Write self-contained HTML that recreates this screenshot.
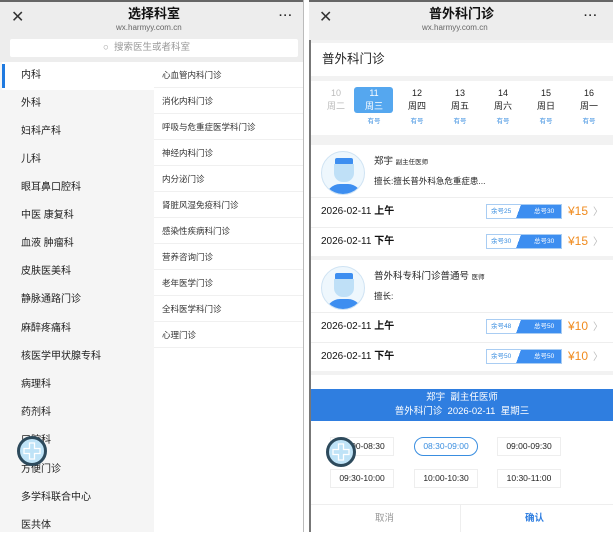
<!DOCTYPE html><html><head><meta charset="utf-8"><style>
*{margin:0;padding:0;box-sizing:border-box}
body{width:613px;height:532px;position:relative;overflow:hidden;background:#fff;font-family:"Liberation Sans","Noto Sans CJK SC",sans-serif;color:#222}
.a{position:absolute;white-space:nowrap}
.hdr{position:absolute;top:0;height:40px;background:#ededed;border-top:2px solid #666}
.t{font-size:13px;font-weight:bold;color:#111;line-height:15px}
.u{font-size:8px;color:#666;line-height:10px}
.nav{font-size:10px;color:#222;line-height:14px}
.row{font-size:10px;color:#111;line-height:12px}
.badge{position:absolute;width:76px;height:15px;border:1px solid #a9cdf3;background:linear-gradient(110deg,#fff 0 43%,#3d8ef0 43% 100%);font-size:6.5px}
.badge span{position:absolute;top:3px;line-height:8px}
.pr{color:#f08a1c;font-size:12px;line-height:14px}
.chev{color:#bbb;font-size:10px;line-height:12px}
.slot{position:absolute;width:64px;height:19px;border:1px solid #eee;font-size:8.5px;text-align:center;line-height:17px;color:#222}
.plus{position:absolute;width:30px;height:30px}
.av{position:absolute;width:44px;height:44px;border-radius:50%;border:1px solid #cfe3f3;background:#eef7fd;overflow:hidden}
</style></head><body>
<!-- left panel -->
<div class="a" style="left:0;top:0;width:2px;height:532px;background:#777"></div>
<div class="hdr" style="left:0;width:304px"></div>
<div class="a" style="left:11px;top:9px;font-size:16px;line-height:18px;color:#333">✕</div>
<div class="a t" style="left:128px;top:6px">选择科室</div>
<div class="a u" style="left:116px;top:23px">wx.harmyy.com.cn</div>
<div class="a" style="left:279px;top:10px;font-size:11px;line-height:12px;font-weight:bold;letter-spacing:1px">···</div>
<div class="a" style="left:0;top:40px;width:304px;height:22px;background:#ededed"></div>
<div class="a" style="left:10px;top:39px;width:288px;height:18px;background:#fff;border-radius:2px"></div>
<div class="a" style="left:103px;top:42px;font-size:9.5px;line-height:12px;color:#999">○&nbsp; 搜索医生或者科室</div>
<div class="a" style="left:0;top:62px;width:154px;height:470px;background:#f5f5f5"></div>
<div class="a" style="left:2px;top:62px;width:152px;height:28px;background:#fff"></div>
<div class="a" style="left:2px;top:64px;width:3px;height:24px;background:#1f7ae0"></div>
<div class="a" style="left:154px;top:62px;width:150px;height:470px;background:#fff"></div>
<div class="a nav" style="left:21px;top:69px">内科</div>
<div class="a nav" style="left:21px;top:97px">外科</div>
<div class="a nav" style="left:21px;top:125px">妇科产科</div>
<div class="a nav" style="left:21px;top:153px">儿科</div>
<div class="a nav" style="left:21px;top:181px">眼耳鼻口腔科</div>
<div class="a nav" style="left:21px;top:209px">中医 康复科</div>
<div class="a nav" style="left:21px;top:237px">血液 肿瘤科</div>
<div class="a nav" style="left:21px;top:265px">皮肤医美科</div>
<div class="a nav" style="left:21px;top:293px">静脉通路门诊</div>
<div class="a nav" style="left:21px;top:322px">麻醉疼痛科</div>
<div class="a nav" style="left:21px;top:350px">核医学甲状腺专科</div>
<div class="a nav" style="left:21px;top:378px">病理科</div>
<div class="a nav" style="left:21px;top:406px">药剂科</div>
<div class="a nav" style="left:21px;top:434px">口腔科</div>
<div class="a nav" style="left:21px;top:463px">方便门诊</div>
<div class="a nav" style="left:21px;top:491px">多学科联合中心</div>
<div class="a nav" style="left:21px;top:519px">医共体</div>
<div class="a" style="left:154px;top:62px;width:150px">
<div style="font-size:8.5px;color:#333">
<div style="height:26px;line-height:26px;padding-left:8px;border-bottom:1px solid #f0f0f0">心血管内科门诊</div>
<div style="height:26px;line-height:26px;padding-left:8px;border-bottom:1px solid #f0f0f0">消化内科门诊</div>
<div style="height:26px;line-height:26px;padding-left:8px;border-bottom:1px solid #f0f0f0">呼吸与危重症医学科门诊</div>
<div style="height:26px;line-height:26px;padding-left:8px;border-bottom:1px solid #f0f0f0">神经内科门诊</div>
<div style="height:26px;line-height:26px;padding-left:8px;border-bottom:1px solid #f0f0f0">内分泌门诊</div>
<div style="height:26px;line-height:26px;padding-left:8px;border-bottom:1px solid #f0f0f0">肾脏风湿免疫科门诊</div>
<div style="height:26px;line-height:26px;padding-left:8px;border-bottom:1px solid #f0f0f0">感染性疾病科门诊</div>
<div style="height:26px;line-height:26px;padding-left:8px;border-bottom:1px solid #f0f0f0">营养咨询门诊</div>
<div style="height:26px;line-height:26px;padding-left:8px;border-bottom:1px solid #f0f0f0">老年医学门诊</div>
<div style="height:26px;line-height:26px;padding-left:8px;border-bottom:1px solid #f0f0f0">全科医学科门诊</div>
<div style="height:26px;line-height:26px;padding-left:8px;border-bottom:1px solid #f0f0f0">心理门诊</div>
</div></div>
<div class="a" style="left:303px;top:0;width:1px;height:532px;background:#bbb"></div>
<svg class="plus" style="left:17px;top:436px" viewBox="0 0 30 30"><circle cx="15" cy="15" r="13.5" fill="#bfe3f7" stroke="#2d4a5c" stroke-width="3"/><path d="M12.5 7h5v5.5H23v5h-5.5V23h-5v-5.5H7v-5h5.5z" fill="none" stroke="#fff" stroke-width="1.3"/></svg>

<!-- right panel -->
<div class="a" style="left:309px;top:0;width:2px;height:532px;background:#777"></div>
<div class="hdr" style="left:309px;width:304px"></div>
<div class="a" style="left:319px;top:9px;font-size:16px;line-height:18px;color:#333">✕</div>
<div class="a t" style="left:429px;top:6px">普外科门诊</div>
<div class="a u" style="left:422px;top:23px">wx.harmyy.com.cn</div>
<div class="a" style="left:584px;top:10px;font-size:11px;line-height:12px;font-weight:bold;letter-spacing:1px">···</div>
<div class="a" style="left:311px;top:40px;width:302px;height:492px;background:#f2f2f2"></div>
<div class="a" style="left:311px;top:43px;width:302px;height:33px;background:#fff"></div>
<div class="a" style="left:322px;top:52px;font-size:12.5px;line-height:15px;color:#222">普外科门诊</div>
<div class="a" style="left:311px;top:81px;width:302px;height:54px;background:#fff"></div>
<div class="a" style="left:354px;top:87px;width:39px;height:26px;background:#55a7ef;border-radius:3px"></div>
<div class="a" style="left:311px;top:88px;width:302px;font-size:9px;line-height:11px;text-align:center">
<div style="position:absolute;left:5px;width:40px;color:#bbb"><div>10</div><div style="margin-top:2px">周二</div></div>
<div style="position:absolute;left:43px;width:40px;color:#fff"><div>11</div><div style="margin-top:2px">周三</div><div style="margin-top:4px;color:#3a8ee0;font-size:6.5px">有号</div></div>
<div style="position:absolute;left:86px;width:40px"><div>12</div><div style="margin-top:2px">周四</div><div style="margin-top:4px;color:#3a8ee0;font-size:6.5px">有号</div></div>
<div style="position:absolute;left:129px;width:40px"><div>13</div><div style="margin-top:2px">周五</div><div style="margin-top:4px;color:#3a8ee0;font-size:6.5px">有号</div></div>
<div style="position:absolute;left:172px;width:40px"><div>14</div><div style="margin-top:2px">周六</div><div style="margin-top:4px;color:#3a8ee0;font-size:6.5px">有号</div></div>
<div style="position:absolute;left:215px;width:40px"><div>15</div><div style="margin-top:2px">周日</div><div style="margin-top:4px;color:#3a8ee0;font-size:6.5px">有号</div></div>
<div style="position:absolute;left:258px;width:40px"><div>16</div><div style="margin-top:2px">周一</div><div style="margin-top:4px;color:#3a8ee0;font-size:6.5px">有号</div></div>
</div>

<!-- card 1 -->
<div class="a" style="left:311px;top:145px;width:302px;height:111px;background:#fff"></div>
<div class="av" style="left:321px;top:151px"><div style="position:absolute;left:13px;top:6px;width:18px;height:7px;background:#3d8ef0;border-radius:2px"></div><div style="position:absolute;left:12px;top:12px;width:20px;height:18px;background:#bfe0f7;border-radius:0 0 9px 9px"></div><div style="position:absolute;left:4px;top:32px;width:36px;height:16px;background:#3d8ef0;border-radius:14px 14px 0 0"></div></div>
<div class="a" style="left:374px;top:156px;font-size:9.5px;line-height:12px">郑宇 <span style="font-size:6.5px">副主任医师</span></div>
<div class="a" style="left:374px;top:176px;font-size:8.5px;line-height:11px">擅长:擅长普外科急危重症患...</div>
<div class="a" style="left:311px;top:197px;width:302px;height:1px;background:#eee"></div>
<div class="a row" style="left:321px;top:206px">2026-02-11 <b>上午</b></div>
<div class="badge" style="left:486px;top:204px"><span style="left:4px;color:#3a8ee0">余号25</span><span style="left:47px;color:#fff">总号30</span></div>
<div class="a pr" style="left:568px;top:204px">¥15</div><div class="a chev" style="left:593px;top:207px">〉</div>
<div class="a" style="left:311px;top:227px;width:302px;height:1px;background:#eee"></div>
<div class="a row" style="left:321px;top:236px">2026-02-11 <b>下午</b></div>
<div class="badge" style="left:486px;top:234px"><span style="left:4px;color:#3a8ee0">余号30</span><span style="left:47px;color:#fff">总号30</span></div>
<div class="a pr" style="left:568px;top:234px">¥15</div><div class="a chev" style="left:593px;top:237px">〉</div>

<!-- card 2 -->
<div class="a" style="left:311px;top:260px;width:302px;height:111px;background:#fff"></div>
<div class="av" style="left:321px;top:266px"><div style="position:absolute;left:13px;top:6px;width:18px;height:7px;background:#3d8ef0;border-radius:2px"></div><div style="position:absolute;left:12px;top:12px;width:20px;height:18px;background:#bfe0f7;border-radius:0 0 9px 9px"></div><div style="position:absolute;left:4px;top:32px;width:36px;height:16px;background:#3d8ef0;border-radius:14px 14px 0 0"></div></div>
<div class="a" style="left:374px;top:271px;font-size:9.5px;line-height:12px">普外科专科门诊普通号 <span style="font-size:6.5px">医师</span></div>
<div class="a" style="left:374px;top:291px;font-size:8.5px;line-height:11px">擅长:</div>
<div class="a" style="left:311px;top:312px;width:302px;height:1px;background:#eee"></div>
<div class="a row" style="left:321px;top:321px">2026-02-11 <b>上午</b></div>
<div class="badge" style="left:486px;top:319px"><span style="left:4px;color:#3a8ee0">余号48</span><span style="left:47px;color:#fff">总号50</span></div>
<div class="a pr" style="left:568px;top:319px">¥10</div><div class="a chev" style="left:593px;top:322px">〉</div>
<div class="a" style="left:311px;top:342px;width:302px;height:1px;background:#eee"></div>
<div class="a row" style="left:321px;top:351px">2026-02-11 <b>下午</b></div>
<div class="badge" style="left:486px;top:349px"><span style="left:4px;color:#3a8ee0">余号50</span><span style="left:47px;color:#fff">总号50</span></div>
<div class="a pr" style="left:568px;top:349px">¥10</div><div class="a chev" style="left:593px;top:352px">〉</div>
<div class="a" style="left:311px;top:375px;width:302px;height:14px;background:#fff"></div>

<!-- modal -->
<div class="a" style="left:311px;top:389px;width:302px;height:32px;background:#2f7ee0;color:#fff;text-align:center;font-size:9.5px;line-height:14px;padding-top:2px">郑宇 &nbsp;副主任医师<br>普外科门诊 &nbsp;2026-02-11 &nbsp;星期三</div>
<div class="a" style="left:311px;top:421px;width:302px;height:111px;background:#fff"></div>
<div class="slot" style="left:330px;top:437px">08:00-08:30</div>
<div class="slot" style="left:414px;top:437px;border:1px solid #3a8ee0;border-radius:10px;color:#3a8ee0">08:30-09:00</div>
<div class="slot" style="left:497px;top:437px">09:00-09:30</div>
<div class="slot" style="left:330px;top:469px">09:30-10:00</div>
<div class="slot" style="left:414px;top:469px">10:00-10:30</div>
<div class="slot" style="left:497px;top:469px">10:30-11:00</div>
<div class="a" style="left:311px;top:504px;width:302px;height:1px;background:#eee"></div>
<div class="a" style="left:460px;top:504px;width:1px;height:28px;background:#eee"></div>
<div class="a" style="left:375px;top:513px;font-size:9.5px;line-height:12px;color:#999">取消</div>
<div class="a" style="left:525px;top:513px;font-size:9.5px;line-height:12px;color:#2f7ee0;font-weight:bold">确认</div>
<svg class="plus" style="left:326px;top:437px" viewBox="0 0 30 30"><circle cx="15" cy="15" r="13.5" fill="#bfe3f7" stroke="#2d4a5c" stroke-width="3"/><path d="M12.5 7h5v5.5H23v5h-5.5V23h-5v-5.5H7v-5h5.5z" fill="none" stroke="#fff" stroke-width="1.3"/></svg>
</body></html>
